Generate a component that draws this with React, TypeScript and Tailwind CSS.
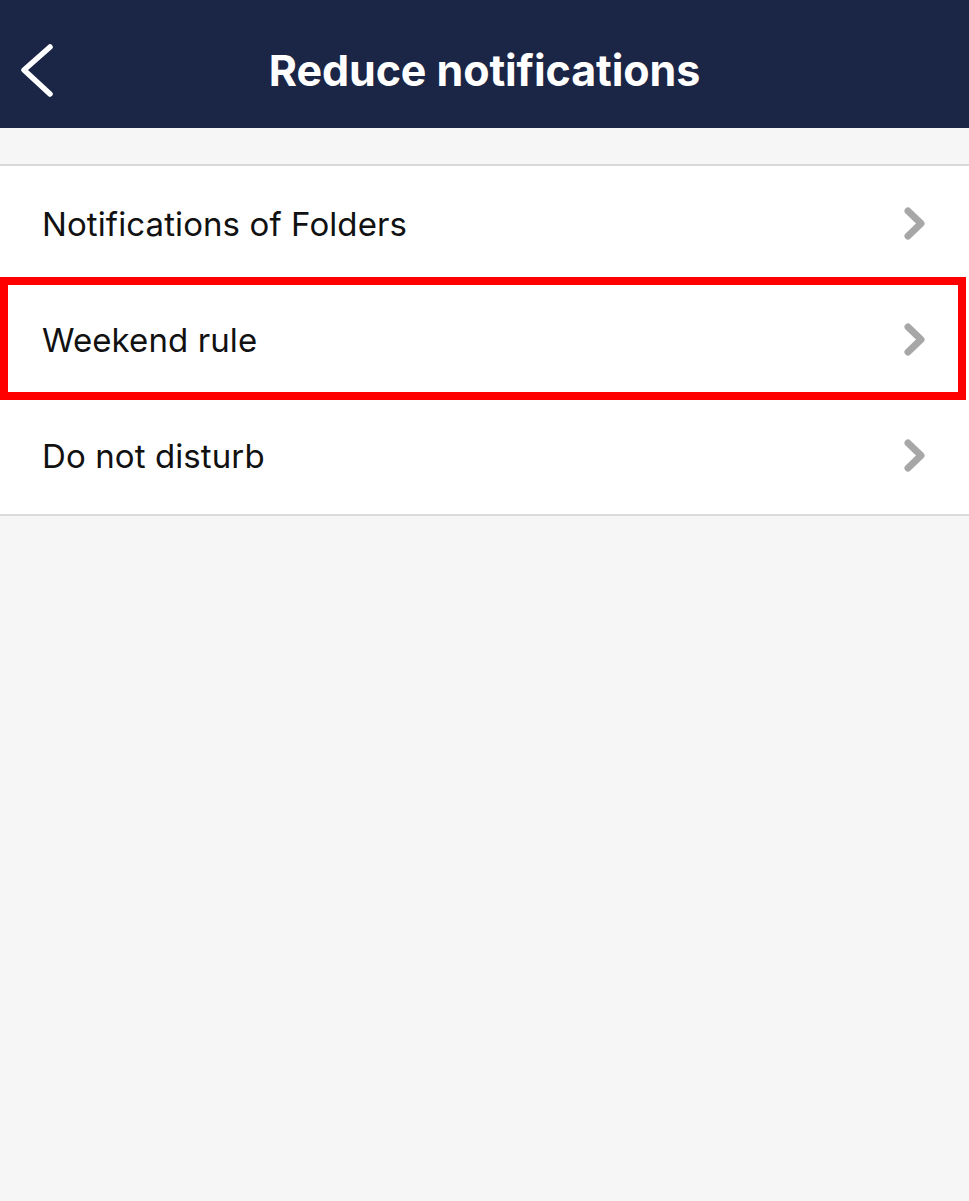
import React from 'react';

const ROWS = ['Notifications of Folders', 'Weekend rule', 'Do not disturb'];

function BackIcon() {
  return (
    <svg width="40" height="60" viewBox="0 0 40 60" fill="none">
      <path d="M30 5 L4 28 L30 52" stroke="#ffffff" strokeWidth="5.5" strokeLinecap="round" strokeLinejoin="round" />
    </svg>
  );
}

function ChevronIcon() {
  return (
    <svg width="30" height="40" viewBox="0 0 30 40" fill="none">
      <path d="M8 7 L21 19.5 L8 32" stroke="#a7a7a7" strokeWidth="7" strokeLinecap="round" strokeLinejoin="round" />
    </svg>
  );
}

export default function App() {
  return (
    <div
      className="w-[969px] h-[1201px] bg-[#f6f6f7] flex flex-col"
      style={{ fontFamily: 'Inter, "Liberation Sans", Arial, sans-serif' }}
    >
      {/* Top bar */}
      <header className="relative h-[128px] bg-[#1b2546] flex items-center justify-center shrink-0">
        <button className="absolute left-[20px] top-[42px]">
          <BackIcon />
        </button>
        <h1 className="text-white text-[43px] font-bold tracking-[-0.1px] mt-[12px]">Reduce notifications</h1>
      </header>

      <div className="h-[38px] border-b-2 border-[#d9d9d9] shrink-0" />

      {/* Settings list */}
      <div className="relative bg-white border-b-2 border-[#dadada]">
        {ROWS.map((label) => (
          <div key={label} className="h-[116px] flex items-center justify-between pl-[42px] pr-[39px]">
            <span className="text-[33px] text-[#111111] tracking-[0.1px] mt-[2px]">{label}</span>
            <ChevronIcon />
          </div>
        ))}
        {/* highlight frame */}
        <div className="absolute left-0 top-[111px] w-[966px] h-[123px] border-[8px] border-[#ff0000] pointer-events-none" />
      </div>
    </div>
  );
}
